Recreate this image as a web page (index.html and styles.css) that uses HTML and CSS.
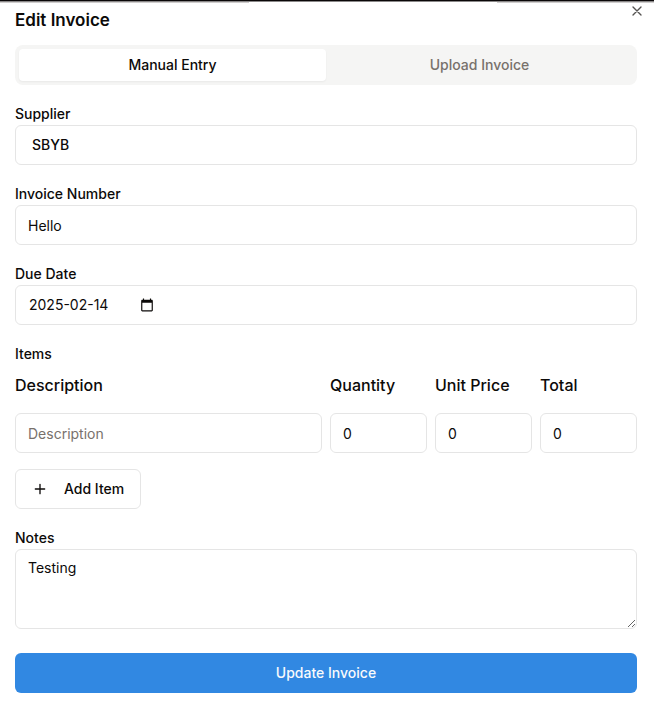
FILE: index.html
```html
<!DOCTYPE html>
<html lang="en">
<head>
<meta charset="utf-8">
<meta name="viewport" content="width=device-width, initial-scale=1">
<title>Edit Invoice</title>
<link rel="stylesheet" href="styles.css">
</head>
<body>
<div class="backdrop-edge"></div>
<main class="dialog" role="dialog" aria-labelledby="title">
  <header class="dialog-header">
    <h1 class="title" id="title">Edit Invoice</h1>
    <button class="close" type="button" aria-label="Close">
      <svg width="16" height="16" viewBox="0 0 24 24" fill="none" stroke="currentColor" stroke-width="2" stroke-linecap="round" stroke-linejoin="round"><path d="M18 6 6 18M6 6l12 12"/></svg>
    </button>
  </header>

  <div class="tabs" role="tablist">
    <button class="tab tab-active" type="button" role="tab" aria-selected="true">Manual Entry</button>
    <button class="tab" type="button" role="tab" aria-selected="false">Upload Invoice</button>
  </div>

  <form class="form">
    <div class="field">
      <label class="label" for="supplier">Supplier</label>
      <select class="control supplier" id="supplier"><option>SBYB</option></select>
    </div>
    <div class="field">
      <label class="label" for="number">Invoice Number</label>
      <input class="control" id="number" type="text" value="Hello">
    </div>
    <div class="field">
      <label class="label" for="due">Due Date</label>
      <div class="control date">
        <input class="date-input" id="due" type="text" value="2025-02-14">
        <button class="date-button" type="button" aria-label="Open calendar">
          <svg width="14" height="14" viewBox="0 0 24 24" fill="currentColor"><path d="M20 3h-1V1h-2v2H7V1H5v2H4c-1.100 0-2 .9-2 2v16c0 1.100.9 2 2 2h16c1.100 0 2-.9 2-2V5c0-1.100-.9-2-2-2zm0 18H4V8h16v13z"/></svg>
        </button>
      </div>
    </div>

    <fieldset class="items">
      <legend class="label">Items</legend>
      <div class="item-row item-head">
        <label class="wide" for="description">Description</label>
        <label for="quantity">Quantity</label>
        <label for="price">Unit Price</label>
        <label for="total">Total</label>
      </div>
      <div class="item-row">
        <input class="control wide" id="description" type="text" placeholder="Description">
        <input class="control" id="quantity" type="number" value="0">
        <input class="control" id="price" type="number" value="0">
        <input class="control" id="total" type="number" value="0">
      </div>
      <button class="add" type="button">
        <svg width="16" height="16" viewBox="0 0 24 24" fill="none" stroke="currentColor" stroke-width="2" stroke-linecap="round" stroke-linejoin="round"><path d="M5 12h14M12 5v14"/></svg>
        Add Item
      </button>
    </fieldset>

    <div class="field">
      <label class="label" for="notes">Notes</label>
      <textarea class="control notes" id="notes">Testing</textarea>
    </div>
    <button class="submit" type="submit">Update Invoice</button>
  </form>
</main>
</body>
</html>
```

FILE: styles.css
```css
* {
  box-sizing: border-box;
}

body {
  margin: 0;
  background: #fff;
  color: #0c0a09;
  font: 400 14px/20px Inter, "Liberation Sans", sans-serif;
}

button,
input,
select,
textarea {
  margin: 0;
  font: inherit;
  color: inherit;
}

button {
  border: 0;
  padding: 0;
  background: none;
  font-weight: 450;
  cursor: pointer;
}

.backdrop-edge {
  height: 3px;
  background:
    linear-gradient(#0a0708 0 1px, #8a8888 1px 2px, transparent 2px),
    linear-gradient(90deg, #cfcdcd 0 38%, #fff 38% 76%, #cfcdcd 76%);
}

.dialog {
  padding: 0 17px 20px 15px;
}

.dialog-header {
  display: flex;
  align-items: flex-start;
  justify-content: space-between;
  margin-right: -8px;
  padding-bottom: 13px;
}

.title {
  margin: 0;
  padding-top: 5px;
  font-size: 17px;
  line-height: 24px;
  font-weight: 600;
}

.close {
  display: flex;
  color: #555352;
}

.tabs {
  display: grid;
  grid-template-columns: 1fr 1fr;
  padding: 4px;
  border-radius: 8px;
  background: #f5f5f4;
}

.tab {
  height: 32px;
  border-radius: 4px;
  color: #78716c;
}

.tab-active {
  background: #fff;
  color: #0c0a09;
  box-shadow: 0 1px 2px rgb(0 0 0 / 5%);
}

.form {
  display: flex;
  flex-direction: column;
  gap: 19px;
  padding-top: 19px;
}

.field {
  display: flex;
  flex-direction: column;
  gap: 1px;
}

.label {
  padding: 0;
  font-weight: 450;
}

.control {
  width: 100%;
  min-width: 0;
  height: 40px;
  padding: 0 12px;
  border: 1px solid #e5e5e5;
  border-radius: 6px;
  background: #fff;
  appearance: none;
}

.control::placeholder {
  color: #78716c;
}

.control[type="number"] {
  appearance: textfield;
}

.supplier {
  padding: 0 16px;
  font-weight: 450;
}

.date {
  display: flex;
  align-items: center;
  gap: 27px;
  padding: 0 13px;
}

.date-input {
  width: 84px;
  border: 0;
  padding: 0;
  outline: 0;
  background: none;
}

.date-button {
  display: flex;
}

.items {
  min-width: 0;
  margin: 0;
  padding: 0;
  border: 0;
}

.item-row {
  display: grid;
  grid-template-columns: repeat(12, 1fr);
  gap: 8px;
}

.item-row > * {
  grid-column: span 2;
}

.item-row > .wide {
  grid-column: span 6;
}

.item-head {
  padding: 9px 0 16px;
  font-size: 16px;
  line-height: 24px;
  font-weight: 450;
}

.add {
  display: flex;
  align-items: center;
  gap: 16px;
  height: 40px;
  margin-top: 16px;
  padding: 0 16px;
  border: 1px solid #e5e5e5;
  border-radius: 6px;
}

.notes {
  height: 80px;
  padding: 8px 12px;
  resize: vertical;
}

.submit {
  height: 40px;
  margin-top: 5px;
  border-radius: 6px;
  background: #3188e2;
  color: #f8fafc;
}
```
